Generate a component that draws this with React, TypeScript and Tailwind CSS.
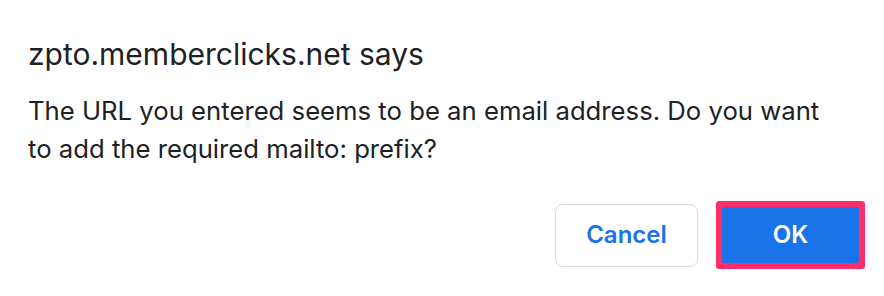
export default function App() {
  return (
    <div className="h-[296px] w-[884px] bg-white font-['Inter',sans-serif] text-[#202124]">
      <div className="pl-[28px] pr-[19px] pt-[37px]">
        <h1 className="text-[30px] leading-[34px] font-normal">zpto.memberclicks.net says</h1>
        <p className="mt-[21px] text-[25.7px] leading-[38px]">
          The URL you entered seems to be an email address. Do you want
          <br />
          to add the required mailto: prefix?
        </p>
        <div className="mt-[33px] flex items-center justify-end gap-[18px]">
          <button className="h-[63px] w-[143px] rounded-[8px] border border-[#dadce0] bg-white text-[24px] font-semibold text-[#1a73e8]">
            Cancel
          </button>
          <div className="rounded-[3px] bg-[#ff2d6a] p-[6px]">
            <button className="block h-[56px] w-[137px] rounded-[2px] bg-[#1a73e8] text-[24px] font-semibold text-white">
              OK
            </button>
          </div>
        </div>
      </div>
    </div>
  );
}
